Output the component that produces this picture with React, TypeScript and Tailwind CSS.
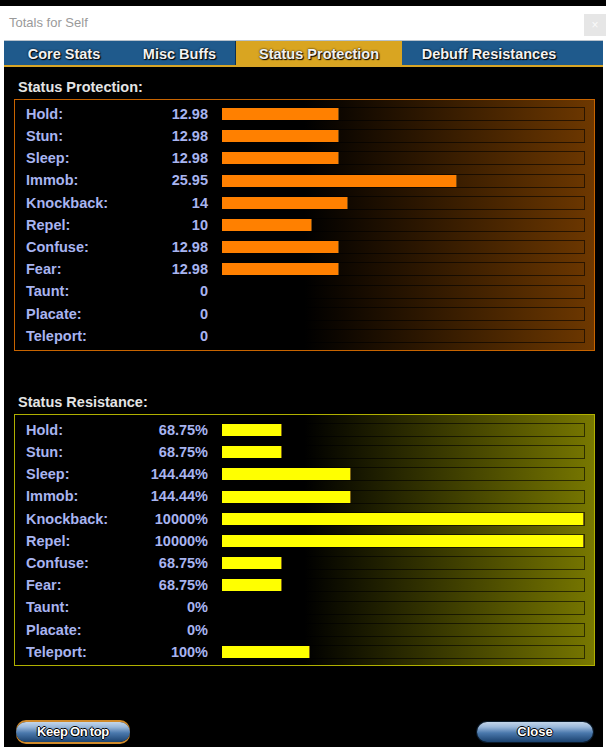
import React from "react";

type Row = { label: string; value: string; fill: number };

const protection: Row[] = [
  { label: "Hold:", value: "12.98", fill: 117 },
  { label: "Stun:", value: "12.98", fill: 117 },
  { label: "Sleep:", value: "12.98", fill: 117 },
  { label: "Immob:", value: "25.95", fill: 235 },
  { label: "Knockback:", value: "14", fill: 126 },
  { label: "Repel:", value: "10", fill: 90 },
  { label: "Confuse:", value: "12.98", fill: 117 },
  { label: "Fear:", value: "12.98", fill: 117 },
  { label: "Taunt:", value: "0", fill: 0 },
  { label: "Placate:", value: "0", fill: 0 },
  { label: "Teleport:", value: "0", fill: 0 },
];

const resistance: Row[] = [
  { label: "Hold:", value: "68.75%", fill: 60 },
  { label: "Stun:", value: "68.75%", fill: 60 },
  { label: "Sleep:", value: "144.44%", fill: 129 },
  { label: "Immob:", value: "144.44%", fill: 129 },
  { label: "Knockback:", value: "10000%", fill: 362 },
  { label: "Repel:", value: "10000%", fill: 362 },
  { label: "Confuse:", value: "68.75%", fill: 60 },
  { label: "Fear:", value: "68.75%", fill: 60 },
  { label: "Taunt:", value: "0%", fill: 0 },
  { label: "Placate:", value: "0%", fill: 0 },
  { label: "Teleport:", value: "100%", fill: 88 },
];

function StatRows({ rows, kind }: { rows: Row[]; kind: "orange" | "yellow" }) {
  const fillCls = kind === "orange" ? "bg-[#ff8000]" : "bg-[#ffff00]";
  return (
    <>
      {rows.map((r) => (
        <div key={r.label} className="flex h-[22.2px] items-center pl-[11px] pr-[9px]">
          <div className="flex w-[182px] justify-between text-[14.5px] font-bold leading-none text-[#a8b4f0] [text-shadow:1px_1px_1px_#000]">
            <span>{r.label}</span>
            <span>{r.value}</span>
          </div>
          <div className="ml-[13px] flex h-[14px] flex-1 border border-[rgba(0,0,0,0.6)]">
            {r.fill > 0 && (
              <div className={`h-full ${fillCls} border-r border-[rgba(90,60,20,0.8)]`} style={{ width: `${r.fill}px` }} />
            )}
          </div>
        </div>
      ))}
    </>
  );
}

const tabs = [
  { name: "Core Stats", w: "w-[120px]", active: false },
  { name: "Misc Buffs", w: "w-[111px]", active: false },
  { name: "Status Protection", w: "w-[167px]", active: true },
  { name: "Debuff Resistances", w: "w-[174px]", active: false },
];

const btnBg =
  "bg-[linear-gradient(to_bottom,#c4d6ea_0%,#9ab8da_25%,#4a78ac_55%,#1b426f_100%)]";

export default function App() {
  return (
    <div className="relative h-[750px] w-[606px] overflow-hidden bg-black pt-[6px] font-['Liberation_Sans',Arial,sans-serif]">
      <div className="flex h-[744px] flex-col bg-white pb-[3px] pl-[4px] pr-[3px]">
        {/* title bar */}
        <div className="flex h-[34px] items-center pl-[5px]">
          <span className="text-[13px] text-[#9a9a9a]">Totals for Self</span>
        </div>
        <div className="absolute right-0 top-[14px] flex h-[22px] w-[22px] items-center justify-center bg-[#e6e6e6] text-[12px] leading-none text-[#fafafa]">
          ×
        </div>

        {/* tabs */}
        <div className="flex h-[27px] border-b-2 border-t border-b-[#d8a526] border-t-[#b8c2cc] bg-[#1f5a8c]">
          {tabs.map((t) => (
            <div
              key={t.name}
              className={`${t.w} flex items-center justify-center pt-[3px] text-[14.5px] font-bold text-[#f2f2f2] [text-shadow:0_0_2px_#000,1px_1px_1px_#000] ${
                t.active ? "border-l border-[#0f3050] bg-[#d9a521]" : ""
              }`}
            >
              {t.name}
            </div>
          ))}
        </div>

        {/* content */}
        <div className="flex flex-1 flex-col bg-black pl-[10px] pr-[8px] pt-[10px]">
          <div className="h-[21px] pl-[4px] text-[14.5px] font-bold leading-[21px] text-[#e4e4e4] [text-shadow:1px_1px_1px_#000]">
            Status Protection:
          </div>
          <div className="mt-[1px] h-[252px] border border-[#c86400] bg-[linear-gradient(to_right,#000_50%,#6e3800_100%)] pt-[3px]">
            <StatRows rows={protection} kind="orange" />
          </div>

          <div className="mt-[41px] h-[21px] pl-[4px] text-[14.5px] font-bold leading-[21px] text-[#e4e4e4] [text-shadow:1px_1px_1px_#000]">
            Status Resistance:
          </div>
          <div className="mt-[1px] h-[252px] border border-[#b0b000] bg-[linear-gradient(to_right,#000_50%,#787800_100%)] pt-[4px]">
            <StatRows rows={resistance} kind="yellow" />
          </div>

          <div className="mt-auto flex items-center justify-between pb-[5px] pl-[2px] pr-[2px]">
            <div className={`flex h-[20px] w-[114px] items-center justify-center rounded-full ${btnBg} text-[13px] font-bold tracking-[-0.3px] text-white shadow-[0_-2px_0_#d08a2a,0_2px_0_#d08a2a] [word-spacing:-1px] [text-shadow:-1px_0_#000,1px_0_#000,0_-1px_#000,0_1px_#000]`}>
              Keep On top
            </div>
            <div className={`flex h-[20px] w-[116px] items-center justify-center rounded-full ${btnBg} text-[13px] font-bold text-white shadow-[0_0_0_1px_#0a1a2a] [text-shadow:-1px_0_#000,1px_0_#000,0_-1px_#000,0_1px_#000]`}>
              Close
            </div>
          </div>
        </div>
      </div>
    </div>
  );
}
